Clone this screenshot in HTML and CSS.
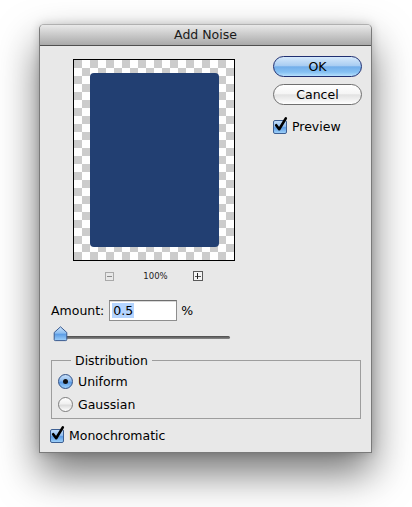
FILE: index.html
```html
<!DOCTYPE html>
<html>
<head>
<meta charset="utf-8">
<link rel="stylesheet" href="styles.css">
</head>
<body>
<div class="stage">
  <div class="window">
    <div class="titlebar">Add Noise</div>
    <div class="content">
      <div class="top">
        <div class="preview-col">
          <div class="preview"><div class="image"></div></div>
          <div class="zoom-row">
            <span class="zbtn minus"><span class="hbar"></span></span>
            <span class="zlabel">100%</span>
            <span class="zbtn plus"><span class="hbar"></span><span class="vbar"></span></span>
          </div>
        </div>
        <div class="buttons">
          <div class="btn ok">OK</div>
          <div class="btn cancel">Cancel</div>
          <div class="check preview-check">
            <span class="cb">
              <svg width="16" height="17" viewBox="0 0 16 17"><path d="M3.2 9.2 L6.2 13.2 L12.8 2.4" fill="none" stroke="#000" stroke-width="2.6" stroke-linecap="round" stroke-linejoin="round"/></svg>
            </span>
            <span>Preview</span>
          </div>
        </div>
      </div>
      <div class="amount">
        <span class="amount-label">Amount:</span>
        <span class="input"><span class="sel">0.5</span></span>
        <span class="pct">%</span>
      </div>
      <div class="slider">
        <div class="track"></div>
        <svg class="thumb" width="15" height="16" viewBox="0 0 15 16">
          <defs>
            <linearGradient id="tg" x1="0" y1="0" x2="0" y2="1">
              <stop offset="0" stop-color="#cfe5fb"/>
              <stop offset="0.45" stop-color="#8cbdf0"/>
              <stop offset="0.55" stop-color="#5d9ee6"/>
              <stop offset="1" stop-color="#9fd0fa"/>
            </linearGradient>
          </defs>
          <path d="M7.5 0.8 L13.8 6.5 L13.8 13.6 Q13.8 14.6 12.8 14.6 L2.2 14.6 Q1.2 14.6 1.2 13.6 L1.2 6.5 Z" fill="url(#tg)" stroke="#3b5b8f" stroke-width="1"/>
        </svg>
      </div>
      <fieldset class="group">
        <legend>Distribution</legend>
        <div class="radio-row"><span class="radio on"><span class="dot"></span></span><span>Uniform</span></div>
        <div class="radio-row"><span class="radio"></span><span>Gaussian</span></div>
      </fieldset>
      <div class="check mono-check">
        <span class="cb">
          <svg width="16" height="17" viewBox="0 0 16 17"><path d="M3.2 9.2 L6.2 13.2 L12.8 2.4" fill="none" stroke="#000" stroke-width="2.6" stroke-linecap="round" stroke-linejoin="round"/></svg>
        </span>
        <span>Monochromatic</span>
      </div>
    </div>
  </div>
</div>
</body>
</html>
```
FILE: styles.css
```css
html, body {
  margin: 0;
  padding: 0;
  background: #ffffff;
}
body {
  font-family: "DejaVu Sans", "Liberation Sans", sans-serif;
  font-size: 12.5px;
  color: #000;
}
.stage {
  padding: 24px 0 0 39px;
  height: 507px;
  box-sizing: border-box;
  overflow: hidden;
}
.window {
  width: 333px;
  height: 429px;
  box-sizing: border-box;
  background: #e8e8e8;
  border: 1px solid #7a7a7a;
  border-top-color: #b0b0b0;
  border-radius: 5px 5px 0 0;
  box-shadow: 0 20px 40px rgba(0, 0, 0, 0.55), 0 0 10px rgba(0, 0, 0, 0.18);
  display: flex;
  flex-direction: column;
}
.titlebar {
  height: 20px;
  line-height: 20px;
  text-align: center;
  border-bottom: 1px solid #4f4f4f;
  border-radius: 4px 4px 0 0;
  background: linear-gradient(#e9e9e9, #cfcfcf 40%, #a9a9a9);
  font-size: 12.5px;
  color: #1a1a1a;
}
.content {
  display: flex;
  flex-direction: column;
  padding-top: 10px;
}
.top {
  display: flex;
}
.preview-col {
  margin: 3px 0 0 33px;
  width: 162px;
  display: flex;
  flex-direction: column;
  align-items: center;
}
.preview {
  width: 162px;
  height: 202px;
  box-sizing: border-box;
  border: 1px solid #000;
  padding: 13px 15px 13px 16px;
  background-color: #ffffff;
  background-image:
    linear-gradient(45deg, #cccccc 25%, transparent 25%, transparent 75%, #cccccc 75%),
    linear-gradient(45deg, #cccccc 25%, transparent 25%, transparent 75%, #cccccc 75%);
  background-size: 16px 16px;
  background-position: 8px 0, 0 8px;
}
.image {
  width: 129px;
  height: 174px;
  background: #223f72;
  border-radius: 4px;
}
.zoom-row {
  margin-top: 9px;
  display: flex;
  align-items: center;
  height: 12px;
}
.zbtn {
  position: relative;
  box-sizing: border-box;
  display: block;
}
.minus {
  width: 9px;
  height: 9px;
  border: 1px solid #a9a9a9;
}
.plus {
  width: 10px;
  height: 10px;
  border: 1px solid #5a5a5a;
  margin-left: 25px;
  background: #f4f4f4;
}
.hbar {
  position: absolute;
  left: 1px;
  right: 1px;
  top: 50%;
  height: 1px;
  margin-top: -0.5px;
  background: #555;
}
.minus .hbar {
  background: #8a8a8a;
}
.vbar {
  position: absolute;
  top: 1px;
  bottom: 1px;
  left: 50%;
  width: 1px;
  margin-left: -0.5px;
  background: #222;
}
.zlabel {
  margin-left: 29px;
  font-size: 8.5px;
  color: #222;
}
.buttons {
  margin-left: 38px;
  display: flex;
  flex-direction: column;
}
.btn {
  width: 89px;
  height: 21px;
  box-sizing: border-box;
  border-radius: 11px;
  text-align: center;
  line-height: 19px;
  font-size: 12.5px;
}
.ok {
  border: 1px solid #1f2f72;
  background: linear-gradient(#d6e9fb 0%, #a9cdf2 45%, #72aeea 52%, #86c1f3 80%, #b6e0fc 100%);
}
.cancel {
  margin-top: 7px;
  border: 1px solid #6f6f6f;
  background: linear-gradient(#ffffff 0%, #f5f5f5 45%, #e2e2e2 52%, #f2f2f2 80%, #ffffff 100%);
}
.check {
  display: flex;
  align-items: center;
}
.preview-check {
  margin-top: 14px;
}
.cb {
  position: relative;
  width: 14px;
  height: 14px;
  box-sizing: border-box;
  border: 1px solid #3d5f92;
  border-radius: 2px;
  background: linear-gradient(#c2dcf8 0%, #8fbdf0 45%, #5c9ce6 55%, #9ccff8 100%);
  margin-right: 5px;
  flex: none;
}
.cb svg {
  position: absolute;
  left: -1px;
  top: -5px;
}
.amount {
  margin: 18px 0 0 11px;
  display: flex;
  align-items: center;
}
.input {
  margin-left: 5px;
  width: 68px;
  height: 21px;
  box-sizing: border-box;
  border: 1px solid #8e8e8e;
  border-top-color: #6e6e6e;
  background: #fff;
  box-shadow: inset 0 1px 0 #d8d8d8;
  padding: 2px 0 0 2px;
  line-height: 15px;
}
.sel {
  background: #b5d5ff;
  padding: 0 1px;
}
.pct {
  margin-left: 4px;
}
.slider {
  position: relative;
  margin: 5px 0 0 13px;
  width: 180px;
  height: 16px;
}
.track {
  margin: 10px 0 0 2px;
  width: 175px;
  height: 3px;
  border-radius: 2px;
  background: linear-gradient(#4a4a4a, #8a8a8a);
}
.thumb {
  position: absolute;
  left: 0;
  top: 0;
}
.group {
  margin: 11px 0 0 11px;
  width: 310px;
  box-sizing: border-box;
  border: 1px solid #9d9d9d;
  padding: 2px 0 2px 6px;
  min-width: 0;
}
.group legend {
  margin-left: 13px;
  padding: 0 4px;
  font-size: 12.5px;
}
.radio-row {
  display: flex;
  align-items: center;
  height: 23px;
}
.radio {
  width: 15px;
  height: 15px;
  box-sizing: border-box;
  border-radius: 50%;
  border: 1px solid #7d7d7d;
  background: linear-gradient(#ffffff, #f0f0f0 45%, #dcdcdc 55%, #ffffff);
  margin-right: 5px;
  display: flex;
  align-items: center;
  justify-content: center;
}
.radio.on {
  border-color: #2f4f85;
  background: linear-gradient(#c5def8 0%, #8fbcef 45%, #5b9be6 55%, #9dd0f9 100%);
}
.dot {
  width: 5px;
  height: 5px;
  border-radius: 50%;
  background: #111;
}
.mono-check {
  margin: 9px 0 0 10px;
}
```
